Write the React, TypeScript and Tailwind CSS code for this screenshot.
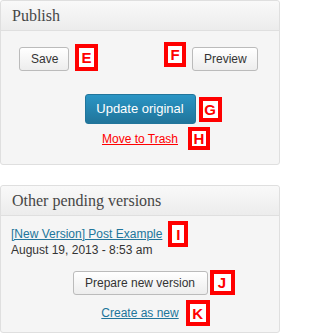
import React from "react";

const sans = { fontFamily: '"Liberation Sans", Arial, sans-serif' };

// red annotation marker shown next to the control it points at
function Tag({ letter, className = "" }: { letter: string; className?: string }) {
  return (
    <span
      className={`flex shrink-0 items-center justify-center border-[4px] border-[#ff0000] bg-white text-[15px] font-bold leading-none text-[#ff0000] ${className}`}
    >
      {letter}
    </span>
  );
}

function Panel({ title, children }: { title: string; children: React.ReactNode }) {
  return (
    <div className="rounded-[3px] border border-[#dfdfdf] bg-[#f5f5f5]">
      <div className="h-[30px] rounded-t-[3px] border-b border-[#dfdfdf] bg-gradient-to-b from-[#f9f9f9] to-[#ececec] pl-[11px] font-['Liberation_Serif',serif] text-[16px] leading-[29px] text-[#464646]">
        {title}
      </div>
      {children}
    </div>
  );
}

// centred item with a marker hanging to its right
function Centered({ children, tag }: { children: React.ReactNode; tag: React.ReactNode }) {
  return (
    <div className="grid grid-cols-[1fr_auto_1fr] items-center">
      <div />
      {children}
      {tag}
    </div>
  );
}

const btn =
  "h-[24px] rounded-[3px] border border-[#bbbbbb] bg-gradient-to-b from-white to-[#ededed] px-[11px] text-[12px] text-[#333333]";

export default function App() {
  return (
    <div className="w-[280px] bg-white" style={sans}>
      <Panel title="Publish">
        <div className="pt-[11px] pb-[14px]">
          <div className="flex items-start pl-[18px] pr-[21px]">
            <button className={`${btn} mt-[5px] w-[50px]`}>Save</button>
            <Tag letter="E" className="ml-[6px] mt-[2px] h-[27px] w-[23px]" />
            <div className="flex-1" />
            <Tag letter="F" className="h-[25px] w-[22px]" />
            <button className={`${btn} ml-[6px] mt-[5px] w-[66px]`}>Preview</button>
          </div>
          <div className="mt-[23px]">
            <Centered tag={<Tag letter="G" className="ml-[3px] h-[25px] w-[23px]" />}>
              <button className="h-[30px] w-[111px] rounded-[3px] border border-[#21759b] bg-gradient-to-b from-[#2a95c5] to-[#21759b] text-[13px] text-white">
                Update original
              </button>
            </Centered>
          </div>
          <div className="mt-[3px] text-[12px] leading-[16px]">
            <Centered tag={<Tag letter="H" className="ml-[10px] h-[23px] w-[22px]" />}>
              <a className="text-[#ff0000] underline">Move to Trash</a>
            </Centered>
          </div>
        </div>
      </Panel>

      <div className="mt-[20px]">
        <Panel title="Other pending versions">
          <div className="pt-[10px] pb-[6px] text-[12px] leading-[16px] text-[#333333]">
            <div className="flex items-center px-[10px]">
              <a className="text-[#21759b] underline">[New Version] Post Example</a>
              <Tag letter="I" className="-my-[5px] ml-[6px] h-[26px] w-[20px]" />
            </div>
            <div className="px-[10px]">August 19, 2013 - 8:53 am</div>
            <div className="mt-[12px]">
              <Centered tag={<Tag letter="J" className="ml-[2px] h-[25px] w-[25px]" />}>
                <button className={`${btn} w-[135px]`}>Prepare new version</button>
              </Centered>
            </div>
            <div className="mt-[5px]">
              <Centered tag={<Tag letter="K" className="ml-[7px] h-[26px] w-[24px]" />}>
                <a className="text-[#21759b] underline">Create as new</a>
              </Centered>
            </div>
          </div>
        </Panel>
      </div>
    </div>
  );
}
